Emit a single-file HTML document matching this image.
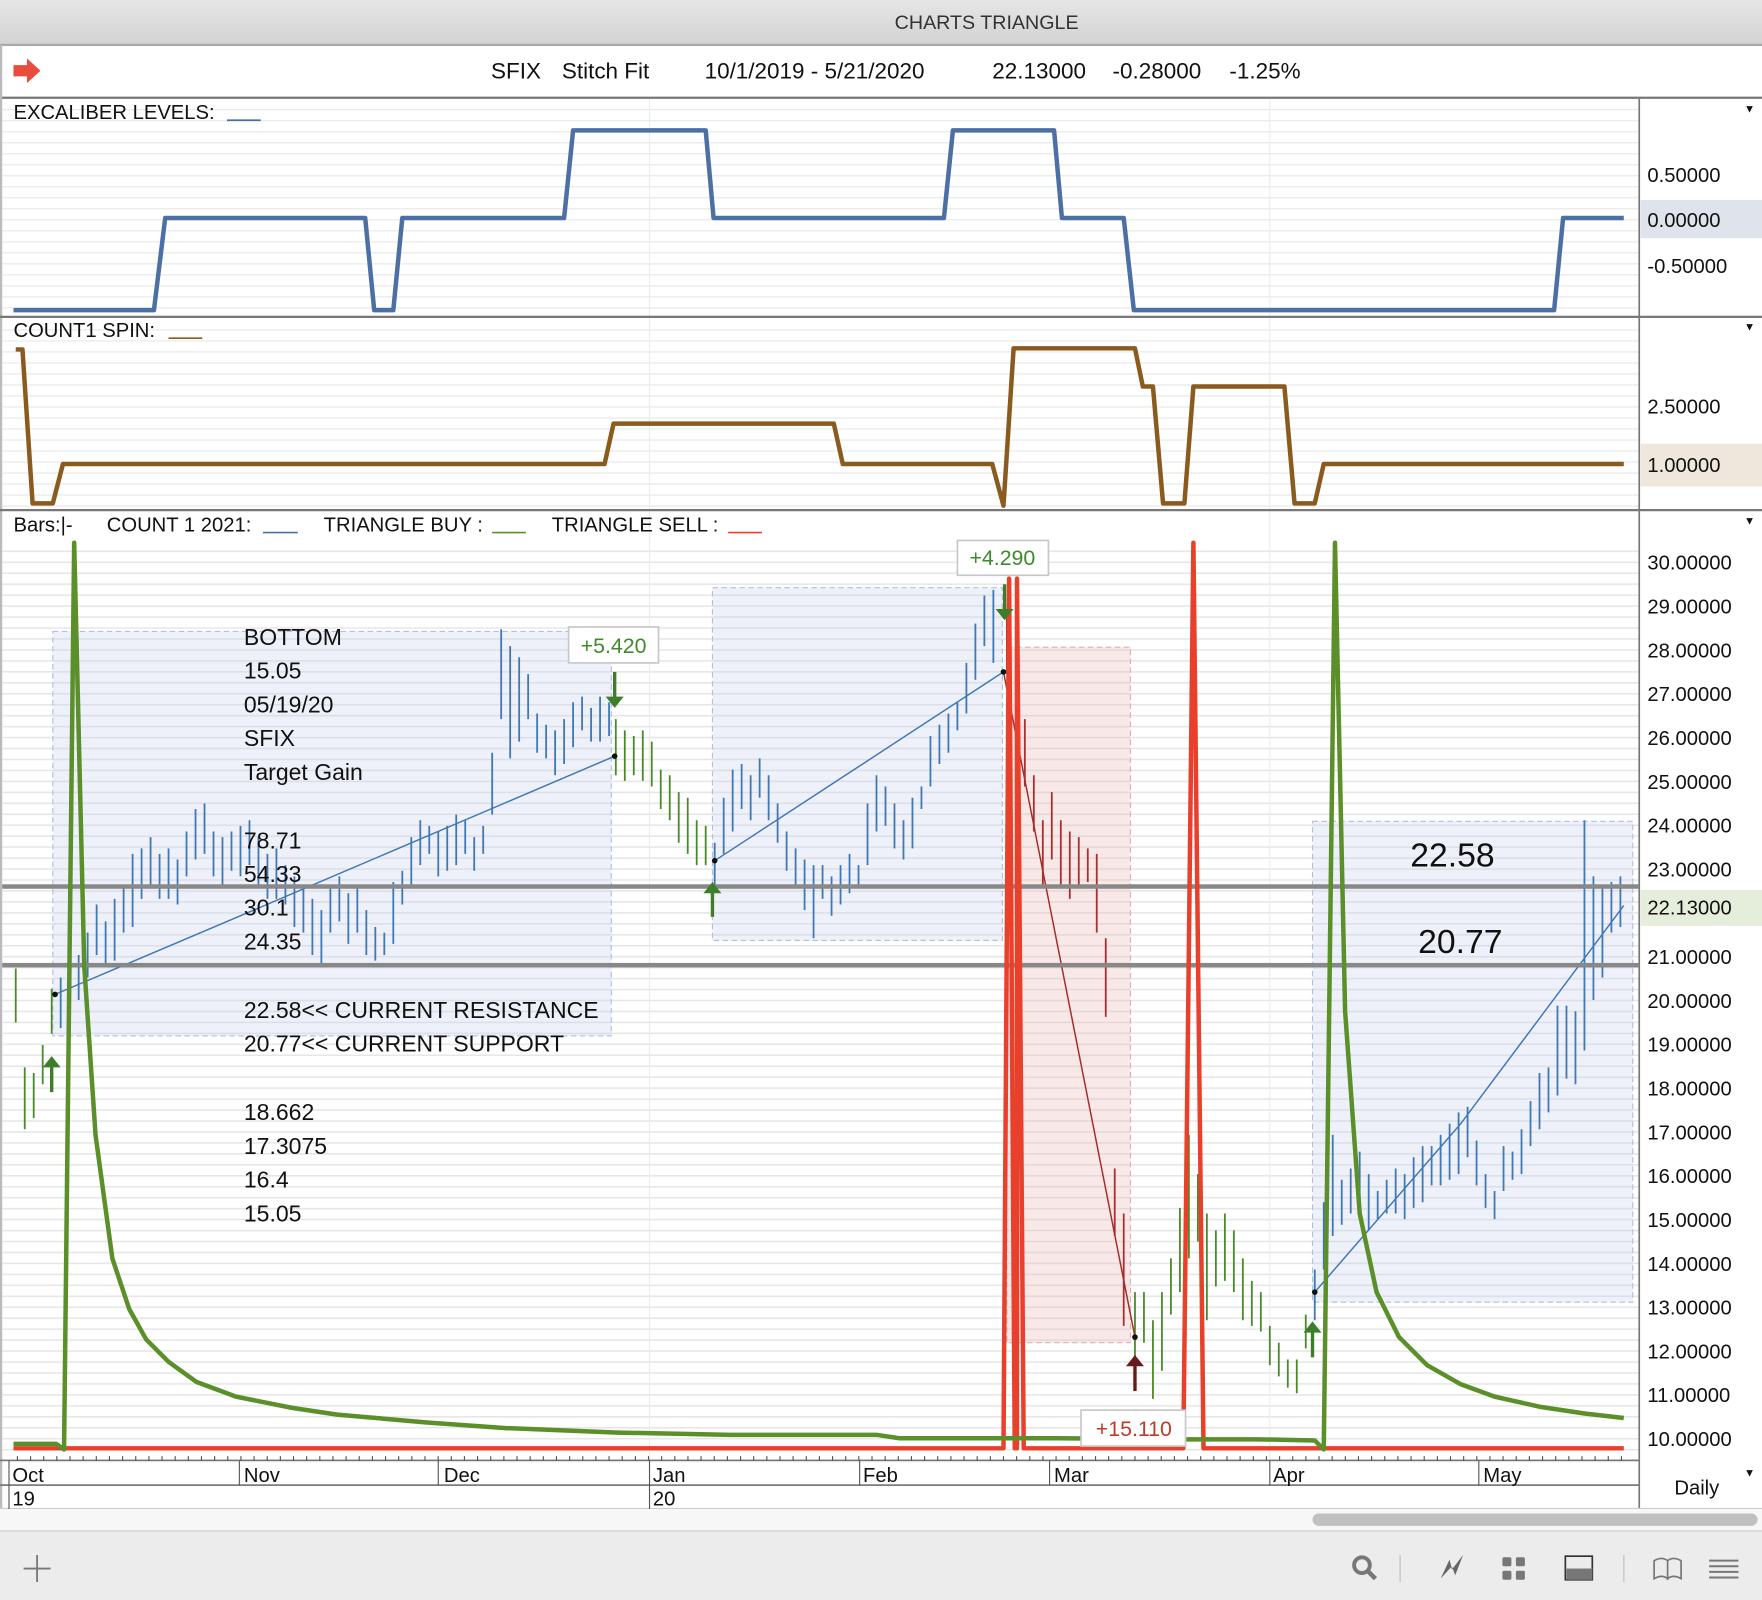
<!DOCTYPE html>
<html><head><meta charset="utf-8">
<style>
html,body{margin:0;padding:0;background:#fff;}
svg{display:block;font-family:"Liberation Sans",Arial,sans-serif;}
</style></head>
<body>
<svg width="1762" height="1600" viewBox="0 0 1568 1424" preserveAspectRatio="none" xmlns="http://www.w3.org/2000/svg">
<defs>
<linearGradient id="tb" x1="0" y1="0" x2="0" y2="1"><stop offset="0" stop-color="#e6e6e6"/><stop offset="1" stop-color="#d2d2d2"/></linearGradient>
<pattern id="g1" patternUnits="userSpaceOnUse" x="0" y="97" width="1500" height="9.8"><rect x="0" y="0" width="1500" height="1.2" fill="#ebebeb"/></pattern>
<pattern id="g3" patternUnits="userSpaceOnUse" x="0" y="490" width="1500" height="9.75"><rect x="0" y="0" width="1500" height="1.4" fill="#e6e6e6"/></pattern>
</defs>
<rect x="0" y="0" width="1568" height="40" fill="url(#tb)"/>
<text x="878" y="26" font-size="17.5" text-anchor="middle" fill="#333">CHARTS TRIANGLE</text>
<rect x="0" y="39" width="1568" height="2" fill="#a8a8a8"/>
<path d="M12 58h12v-6l12 11-12 11v-6h-12z" fill="#e84c3d"/>
<g font-size="20" fill="#111">
<text x="437" y="70">SFIX</text><text x="500" y="70">Stitch Fit</text><text x="627" y="70">10/1/2019 - 5/21/2020</text>
<text x="883" y="70">22.13000</text><text x="990" y="70">-0.28000</text><text x="1094" y="70">-1.25%</text>
</g>
<rect x="0" y="86" width="1568" height="2" fill="#777"/>
<rect x="0" y="40" width="2" height="1322" fill="#bbb"/>
<!-- grids -->
<rect x="2" y="95" width="1456" height="186" fill="url(#g1)"/>
<rect x="2" y="290" width="1456" height="162" fill="url(#g1)"/>
<rect x="2" y="488" width="1456" height="810" fill="url(#g3)"/>
<line x1="578" y1="88" x2="578" y2="1299" stroke="#ececec"/>
<line x1="1130" y1="88" x2="1130" y2="1299" stroke="#ececec"/>
<rect x="1458" y="88" width="1.5" height="1256" fill="#777"/>
<rect x="0" y="281" width="1568" height="2" fill="#777"/>
<rect x="0" y="453" width="1568" height="2" fill="#777"/>
<!-- Panel 1 -->
<text x="12" y="106" font-size="18" fill="#111">EXCALIBER LEVELS:</text>
<line x1="202" y1="107" x2="232" y2="107" stroke="#4a6fa5" stroke-width="1.5"/>
<text x="1552" y="100" font-size="10" fill="#111">▼</text>
<rect x="1460" y="178" width="108" height="34" fill="#dfe4ec"/>
<g font-size="18" fill="#111">
<text x="1466" y="162">0.50000</text><text x="1466" y="202">0.00000</text><text x="1466" y="243">-0.50000</text>
</g>
<polyline fill="none" stroke="#4d70a4" stroke-width="4" stroke-linejoin="round" points="12,276 137,276 147,194 325,194 333,276 350,276 358,194 502,194 510,116 628,116 635,194 840,194 848,116 938,116 945,194 1000,194 1009,276 1383,276 1391,194 1445,194"/>
<!-- Panel 2 -->
<text x="12" y="300" font-size="18" fill="#111">COUNT1 SPIN:</text>
<line x1="150" y1="301" x2="180" y2="301" stroke="#8b5a1e" stroke-width="1.5"/>
<text x="1552" y="294" font-size="10" fill="#111">▼</text>
<rect x="1460" y="395" width="108" height="38" fill="#efe6dc"/>
<text x="1466" y="368" font-size="18" fill="#111">2.50000</text>
<text x="1466" y="420" font-size="18" fill="#111">1.00000</text>
<polyline fill="none" stroke="#8b5a1e" stroke-width="4" stroke-linejoin="round" points="14,311 20,311 29,448 47,448 56,413 538,413 546,377 742,377 750,413 883,413 893,450 902,310 1010,310 1017,344 1026,344 1035,448 1054,448 1062,344 1143,344 1152,448 1170,448 1178,413 1445,413"/>
<!-- Panel 3 -->
<g font-size="18" fill="#111">
<text x="12" y="473">Bars:|-</text><text x="95" y="473">COUNT 1 2021:</text><text x="288" y="473">TRIANGLE BUY :</text><text x="491" y="473">TRIANGLE SELL :</text>
</g>
<line x1="234" y1="474" x2="265" y2="474" stroke="#4a6fa5" stroke-width="1.5"/>
<line x1="438" y1="474" x2="468" y2="474" stroke="#5a8f2a" stroke-width="1.5"/>
<line x1="648" y1="474" x2="678" y2="474" stroke="#e8402a" stroke-width="1.5"/>
<text x="1552" y="467" font-size="10" fill="#111">▼</text>
<rect x="1460" y="792" width="108" height="32" fill="#e5eedb"/>
<g font-size="18" fill="#111">
<text x="1466" y="507">30.00000</text><text x="1466" y="546">29.00000</text><text x="1466" y="585">28.00000</text><text x="1466" y="624">27.00000</text>
<text x="1466" y="663">26.00000</text><text x="1466" y="702">25.00000</text><text x="1466" y="741">24.00000</text><text x="1466" y="780">23.00000</text>
<text x="1466" y="814">22.13000</text><text x="1466" y="858">21.00000</text><text x="1466" y="897">20.00000</text><text x="1466" y="936">19.00000</text>
<text x="1466" y="975">18.00000</text><text x="1466" y="1014">17.00000</text><text x="1466" y="1053">16.00000</text><text x="1466" y="1092">15.00000</text>
<text x="1466" y="1131">14.00000</text><text x="1466" y="1170">13.00000</text><text x="1466" y="1209">12.00000</text><text x="1466" y="1248">11.00000</text>
<text x="1466" y="1287">10.00000</text>
</g>
<!-- boxes -->
<rect x="47" y="562" width="497" height="360" fill="rgba(195,205,232,0.28)" stroke="#b3c0dc" stroke-dasharray="5,3"/>
<rect x="634" y="523" width="258" height="314" fill="rgba(195,205,232,0.28)" stroke="#b3c0dc" stroke-dasharray="5,3"/>
<rect x="1168" y="731" width="285" height="428" fill="rgba(195,205,232,0.28)" stroke="#b3c0dc" stroke-dasharray="5,3"/>
<rect x="896" y="576" width="110" height="619" fill="rgba(232,180,180,0.3)" stroke="#e0b0b0" stroke-dasharray="5,3"/>
<!-- bars -->
<g fill="none" stroke-width="1.6">
<path stroke="#4a8a2a" d="M14 862V910M22 950V1005M30 955V995M38 930V965M46 880V920"/>
<path stroke="#3f78b5" d="M54 870V915M62 860V900M70 850V890M78 830V870M86 805V850M94 820V860M102 800V855M110 790V830M118 760V825M126 755V800M134 745V790M142 760V800M150 755V800M158 765V805M166 740V780M174 720V765M182 715V760M190 740V780M198 745V790M206 740V775M214 735V780M222 730V770M230 745V790M238 760V800M246 755V800M254 770V805M262 780V825M270 790V830M278 800V850M286 810V860M294 790V830M302 780V820M310 795V840M318 790V830M326 810V850M334 825V855M342 830V850M350 785V840M358 775V805M366 745V790M374 730V770M382 735V760M390 740V780M398 735V775M406 725V770M414 730V760M422 745V775M430 735V760M438 670V725M446 560V640M454 575V675M462 585V660M470 600V640M478 635V670M486 645V675M494 650V690M502 640V680M510 625V665M518 620V650M526 630V660M534 620V660M542 625V655"/>
<path stroke="#4a8a2a" d="M548 640V690M556 650V695M564 655V690M572 650V695M580 660V700M588 685V720M596 690V730M604 705V750M612 710V760M620 730V770M628 735V770"/>
<path stroke="#3f78b5" d="M636 750V790M644 710V760M652 685V740M660 680V720M668 690V730M676 675V710M684 690V730M692 715V750M700 740V775M708 755V790M716 765V810M724 770V835M732 770V800M740 780V815M748 770V805M756 760V795M764 770V790M772 715V770M780 690V740M788 700V735M796 715V755M804 730V765M812 710V755M820 700V720M828 655V700M836 645V680M844 635V670M852 625V650M860 590V635M868 555V605M876 530V575M884 525V590"/>
<path stroke="#a83030" d="M896 545V600M904 600V665M912 640V700M920 690V740M928 730V790M936 705V765M944 730V790M952 740V800M960 745V790M968 755V785M976 760V830M984 835V905M992 1040V1100M1000 1080V1180"/>
<path stroke="#4a8a2a" d="M1010 1150V1215M1018 1150V1195M1026 1175V1245M1034 1150V1220M1042 1120V1170M1050 1075V1150M1058 1010V1120M1066 1045V1105M1074 1080V1175M1082 1095V1145M1090 1080V1140M1098 1095V1150M1106 1120V1175M1114 1140V1180M1122 1150V1185M1130 1180V1215M1138 1195V1225M1146 1210V1235M1154 1210V1240M1162 1170V1200"/>
<path stroke="#3f78b5" d="M1170 1130V1175M1178 1070V1130M1186 1010V1100M1194 1050V1090M1202 1040V1080M1210 1025V1075M1218 1045V1095M1226 1060V1085M1234 1050V1080M1242 1040V1080M1250 1045V1085M1258 1030V1075M1266 1020V1070M1274 1020V1055M1282 1010V1055M1290 1000V1050M1298 990V1045M1306 985V1030M1314 1015V1055M1322 1045V1075M1330 1060V1085M1338 1020V1060M1346 1025V1050M1354 1005V1045M1362 980V1020M1370 955V1005M1378 950V990M1386 895V975M1394 895V960M1402 900V965M1410 730V935M1418 780V890M1426 790V870M1434 785V830M1442 780V825"/>
</g>
<!-- regression lines -->
<g stroke-width="1.3" fill="none">
<polyline stroke="#3f78b5" points="49,885 200,821 350,757 547,673"/>
<polyline stroke="#3f78b5" points="636,766 760,685 893,598"/>
<polyline stroke="#3f78b5" points="1170,1150 1300,1000 1445,806"/>
<line x1="893" y1="598" x2="1010" y2="1190" stroke="#a52a2a"/>
</g>
<g fill="#111"><circle cx="49" cy="885" r="2.5"/><circle cx="547" cy="673" r="2.5"/><circle cx="636" cy="766" r="2.5"/><circle cx="893" cy="598" r="2.5"/><circle cx="1010" cy="1190" r="2.5"/><circle cx="1170" cy="1150" r="2.5"/></g>
<!-- support/resistance -->
<rect x="2" y="787" width="1456" height="4" fill="#888"/>
<rect x="2" y="857" width="1456" height="4" fill="#888"/>
<!-- triangle sell (red) -->
<polyline fill="none" stroke="#e8402a" stroke-width="4" stroke-linejoin="round" points="12,1289 893,1289 898,515 903,1289 905,1289 905,515 911,1289 1053,1289 1062,483 1071,1289 1445,1289"/>
<!-- triangle buy (green) -->
<polyline fill="none" stroke="#5a8f2a" stroke-width="4" stroke-linejoin="round" points="12,1285 50,1285 57,1290 66,483 75,860 85,1010 100,1120 115,1165 130,1192 150,1212 175,1230 210,1243 260,1253 300,1259 380,1266 450,1271 550,1275 650,1277 780,1277 800,1280 893,1280 940,1280 1055,1281 1120,1281 1170,1282 1178,1290 1188,483 1197,900 1210,1080 1225,1150 1245,1190 1270,1215 1300,1232 1330,1243 1370,1252 1410,1258 1445,1262"/>
<!-- arrows -->
<g fill="#3e7d2a" stroke="#3e7d2a" stroke-width="3">
<line x1="46" y1="945" x2="46" y2="972"/><path d="M38 950l8-10 8 10z" stroke="none"/>
<line x1="634" y1="790" x2="634" y2="816"/><path d="M626 795l8-10 8 10z" stroke="none"/>
<line x1="1168" y1="1180" x2="1168" y2="1208"/><path d="M1160 1186l8-10 8 10z" stroke="none"/>
<line x1="547" y1="598" x2="547" y2="624"/><path d="M539 620l8 10 8-10z" stroke="none"/>
<line x1="894" y1="520" x2="894" y2="546"/><path d="M886 542l8 10 8-10z" stroke="none"/>
</g>
<g fill="#6b1a1a" stroke="#6b1a1a" stroke-width="3"><line x1="1010" y1="1212" x2="1010" y2="1238"/><path d="M1002 1216l8-10 8 10z" stroke="none"/></g>
<!-- value boxes -->
<rect x="506" y="558" width="80" height="32" fill="#fff" stroke="#c8c8c8" stroke-width="1.5"/>
<text x="546" y="581" font-size="19" fill="#3e8a2a" text-anchor="middle">+5.420</text>
<rect x="852" y="481" width="81" height="31" fill="#fff" stroke="#c8c8c8" stroke-width="1.5"/>
<text x="892" y="503" font-size="19" fill="#3e8a2a" text-anchor="middle">+4.290</text>
<rect x="962" y="1255" width="93" height="32" fill="#fff" stroke="#c8c8c8" stroke-width="1.5"/>
<text x="1009" y="1278" font-size="19" fill="#c0392b" text-anchor="middle">+15.110</text>
<!-- text block -->
<g font-size="20.5" fill="#111">
<text x="217" y="574">BOTTOM</text><text x="217" y="604">15.05</text><text x="217" y="634">05/19/20</text><text x="217" y="664">SFIX</text><text x="217" y="694">Target Gain</text>
<text x="217" y="755">78.71</text><text x="217" y="785">54.33</text><text x="217" y="815">30.1</text><text x="217" y="845">24.35</text>
<text x="217" y="906">22.58&lt;&lt; CURRENT RESISTANCE</text><text x="217" y="936">20.77&lt;&lt; CURRENT SUPPORT</text>
<text x="217" y="997">18.662</text><text x="217" y="1027">17.3075</text><text x="217" y="1057">16.4</text><text x="217" y="1087">15.05</text>
</g>
<text x="1255" y="771" font-size="30" fill="#111">22.58</text>
<text x="1262" y="848" font-size="30" fill="#111">20.77</text>
<!-- date axis -->
<rect x="0" y="1299" width="1459" height="1.5" fill="#777"/>
<rect x="0" y="1321" width="1459" height="1.5" fill="#777"/>
<rect x="0" y="1342" width="1568" height="1.5" fill="#ccc"/>
<line x1="15" y1="1298" x2="1445" y2="1298" stroke="#555" stroke-width="4" stroke-dasharray="1,10.7"/>
<g stroke="#555" stroke-width="1">
<line x1="8" y1="1300" x2="8" y2="1343"/><line x1="213" y1="1300" x2="213" y2="1322"/><line x1="390" y1="1300" x2="390" y2="1322"/><line x1="578" y1="1300" x2="578" y2="1343"/><line x1="765" y1="1300" x2="765" y2="1322"/><line x1="934" y1="1300" x2="934" y2="1322"/><line x1="1130" y1="1300" x2="1130" y2="1322"/><line x1="1316" y1="1300" x2="1316" y2="1322"/>
</g>
<g font-size="18" fill="#111">
<text x="11" y="1319">Oct</text><text x="11" y="1340">19</text>
<text x="217" y="1319">Nov</text><text x="395" y="1319">Dec</text>
<text x="581" y="1319">Jan</text><text x="581" y="1340">20</text>
<text x="768" y="1319">Feb</text><text x="938" y="1319">Mar</text>
<text x="1133" y="1319">Apr</text><text x="1320" y="1319">May</text>
<text x="1490" y="1330">Daily</text>
</g>
<text x="1552" y="1314" font-size="10" fill="#111">▼</text>
<!-- scrollbar -->
<rect x="0" y="1343" width="1568" height="19" fill="#f7f7f7"/>
<rect x="1168" y="1347" width="396" height="11" rx="5.5" fill="#c0c0c0"/>
<!-- bottom toolbar -->
<rect x="0" y="1362" width="1568" height="62" fill="#ececec"/>
<rect x="0" y="1362" width="1568" height="1" fill="#d0d0d0"/>
<path d="M33 1384v24M21 1396h24" stroke="#777" stroke-width="1.6"/>
<g fill="none" stroke="#777">
<circle cx="1212" cy="1393" r="7" stroke-width="3.5"/><line x1="1217" y1="1398" x2="1224" y2="1405" stroke-width="4"/>
<line x1="1246" y1="1384" x2="1246" y2="1408" stroke="#ccc" stroke-width="1.5"/>
<line x1="1445" y1="1384" x2="1445" y2="1408" stroke="#ccc" stroke-width="1.5"/>
<rect x="1393" y="1385" width="24" height="21" stroke="#333" stroke-width="1.5"/>
<path d="M1472 1389q7-4 12 0v16q-5-4-12 0zM1484 1389q5-4 12 0v16q-7-4-12 0z" stroke-width="1.5"/>
<path d="M1521 1389h26M1521 1394h26M1521 1399h26M1521 1404h26" stroke-width="1.8"/>
</g>
<path d="M1282 1405l8-17 2 9 10-13-7 18-3-8z" fill="#666"/>
<rect x="1394" y="1396" width="23" height="10" fill="#777"/>
<g fill="#777"><rect x="1337" y="1386" width="8" height="8" rx="1.5"/><rect x="1349" y="1386" width="8" height="8" rx="1.5"/><rect x="1337" y="1398" width="8" height="8" rx="1.5"/><rect x="1349" y="1398" width="8" height="8" rx="1.5"/></g>
</svg>
</body></html>
